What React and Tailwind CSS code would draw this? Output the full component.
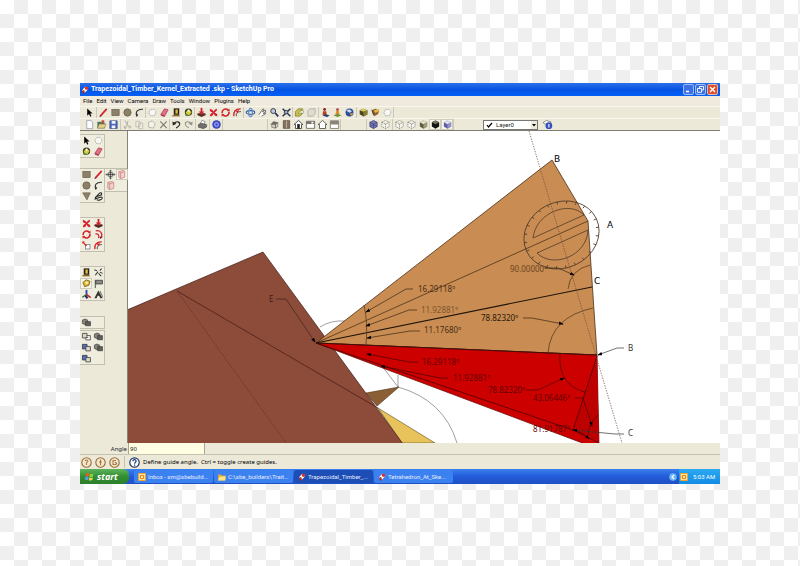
import React from "react";

const RED = "#d3202a";

const art = {
  cursor: <path d="M3.5 1.5v8l2-1.8 1.3 2.8 1.2-.6-1.2-2.7h2.6z" fill="#000" />,
  pencil: <><path d="M2.5 10 9.5 2" stroke={RED} strokeWidth="1.8" /><path d="m1.6 11 .6-2 1.3 1z" fill="#333" /></>,
  rect: <rect x="2" y="2.5" width="8" height="7" fill="#8d8069" stroke="#5f543f" strokeWidth=".6" />,
  circle: <circle cx="6" cy="6" r="4" fill="#8d8069" stroke="#5f543f" strokeWidth=".7" />,
  tri: <path d="M1.8 2h8.4L6.5 9.8z" fill="#8d8069" stroke="#5f543f" strokeWidth=".6" />,
  arc: <path d="M3 10.5C1 5 4 2 9.8 2.4M3 10l1.2-2" fill="none" stroke="#333" strokeWidth="1.1" />,
  squiggle: <path d="M2 9.500C4 4 9 0 9.500 3S2 5 2.500 7.500 9 5 10 7 6 11 4 9.500" fill="none" stroke="#222" strokeWidth="1.1" />,
  comp: <path d="m2 6 2-3.4h3.5L10 5 8 9.5H4z" fill="#f8f8f4" stroke="#a3a39b" strokeWidth=".9" strokeDasharray="1.5 .7" />,
  eraser: <><path d="m2 8 4-6 4 1-3.6 6.6z" fill="#e26f86" stroke="#9c3145" strokeWidth=".7" /><path d="m2 8 4.4 1.6-.4 1.2L2 9.4z" fill="#a62f46" /></>,
  door: <><path d="M3 1.5h6v7H3z" fill="#252016" /><path d="M4.8 2.7h2.6v4.6H4.8z" fill="#e6b83c" /><path d="M1.5 9.5h8" stroke="#8c6e24" strokeWidth="1.5" /></>,
  paint: <><circle cx="6" cy="5.5" r="4" fill="#3b3b1d" /><path d="M3 5.5 6.5 3l3 2.5L7 9 3.6 8z" fill="#d7ce3e" /><path d="m2 9 2-2 1.2 3z" fill="#42872e" /><circle cx="6" cy="4" r="1.2" fill="#fff" /></>,
  push: <><path d="M6 1v5" stroke={RED} strokeWidth="2" /><path d="M2 6.800h8l.8 1.800L6 11 1.200 8.600z" fill="#592b26" /><path d="M3 4.800h6L6 8.400z" fill={RED} /></>,
  move: <path d="m2 2 3 1.2L6 5l1.6-2.4L10 2 9.3 4.4 7 6l3 1.7.2 2.5-2.6-.6L6 7 4.6 9.7 2 10l.6-2.4L5 6 2.2 4.6z" fill={RED} />,
  rotate: <><path d="M2.3 6.5C2 2.8 6 .9 8.7 3.2M9.8 5.4c.4 3.8-3.7 5.6-6.4 3.5" fill="none" stroke={RED} strokeWidth="1.7" /><path d="m7.3 4.4 3.2.6-.2-3.4zM4.7 7.7l-3.2-.4.5 3.3z" fill={RED} /></>,
  follow: <><path d="M3 2c5-1 8 3 6 7M2.5 5.5C6 4.5 7 7 6 10" fill="none" stroke={RED} strokeWidth="1.3" /><path d="m7 8.5 3.8 0L8 11z" fill="#6e1c1c" /></>,
  scale: <><rect x="4.8" y="4.8" width="5" height="5" fill="#fff" stroke="#777" strokeWidth=".8" /><path d="m2 2 4 4.6" stroke={RED} strokeWidth="1.4" /><path d="M1.5 1.5h2.8L1.6 4.2z" fill={RED} /></>,
  offset: <><path d="M2 10C1.3 5 4 1.8 9.5 2" fill="none" stroke={RED} strokeWidth="1.4" /><path d="M4.8 10C4 7 6 5 9.6 5" fill="none" stroke="#333" strokeWidth="1" /><path d="m4 4 3.8-.4L6 7z" fill={RED} /></>,
  orbit: <><ellipse cx="6" cy="6" rx="4.6" ry="2" fill="none" stroke="#315fa8" strokeWidth="1.3" /><ellipse cx="6" cy="6" rx="2" ry="4.6" fill="none" stroke="#6089c5" strokeWidth="1.3" /></>,
  hand: <path d="M2 8.5 6.5 2l1 .6L6 5.4l3-2 .9 1L6.7 7l2.8-.6-.4 1.2L5 10" fill="#fff" stroke="#444" strokeWidth=".8" />,
  zoom: <><circle cx="4.6" cy="4.4" r="2.7" fill="#b9cbe8" stroke="#333" strokeWidth="1" /><path d="m6.8 6.5 3.2 3.7" stroke="#202a56" strokeWidth="1.8" /></>,
  extents: <><path d="m1.8 1.8 8.4 8.4M10.2 1.8l-8.4 8.4" stroke="#252d50" strokeWidth="1.5" /><circle cx="5.6" cy="5.6" r="2" fill="#94abd6" stroke="#222" strokeWidth=".8" /></>,
  tape: <><path d="m2 5 3.6-3 4.3 1.6L8.5 8 4 9.5z" fill="#e2bc31" stroke="#5d4a12" strokeWidth=".8" /><circle cx="6.2" cy="5.2" r="1.3" fill="#fff6bf" /></>,
  getm: <><path d="m1.5 5 3-3h5v5l-3 3h-5z" fill="#cbbd48" stroke="#6b6223" strokeWidth=".6" /><path d="M5 7.5C5 5 7 4.5 8 4.5V3l3 2.4L8 7.7V6.3C7 6.3 6.3 6.6 5 7.5z" fill="#fff" stroke="#557024" strokeWidth=".5" /></>,
  grey: <path d="m2 4 2.6-2H10v5L7.6 10H2z" fill="#dedcd0" stroke="#aeac9f" strokeWidth=".9" />,
  person: <><circle cx="5" cy="2.8" r="1.6" fill="#8a2d20" /><path d="M3.2 4.6h3.6l.6 4.4H2.8z" fill="#b14322" /><path d="m6 8 4.5 1L8 11 3 9.6z" fill="#263d73" /></>,
  person2: <><circle cx="6" cy="2.8" r="1.5" fill="#b33f29" /><path d="M4.5 4.4h3l.7 4H3.8z" fill="#df8b24" /><path d="m1.5 9 4.5-1.5L10.5 9 6 10.8z" fill="#679237" /></>,
  globe: <><circle cx="6" cy="6" r="4.3" fill="#2a4d9b" /><path d="M2.5 4C5 1.5 8 3 8.5 5L6 6.2z" fill="#c9dbf3" /><path d="m6 7 4-.5-1.7 3.2z" fill="#d99835" /></>,
  box: <><path d="m1.8 3.5 4-1.7 4.4 1.7v4.6L6 10.4 1.8 8z" fill="#4a4621" /><path d="m1.8 3.5 4-1.7 4.4 1.7L6 5.2z" fill="#dccf60" /><path d="m6 5.2 4.2-1.7v4.6L6 10.4z" fill="#8b7d30" /></>,
  box2: <><path d="M2 3.5 6 2l4 1.5-1.2 4L4.6 10z" fill="#8f5c25" /><path d="m4 4 5-2 1.4 2L6 6.6z" fill="#eab942" /><path d="m2 3 2 6" stroke="#333" /></>,
  new: <path d="M3 1.5h4.5L9.5 4v6.5H3z" fill="#fff" stroke="#8b93a4" strokeWidth=".8" />,
  open: <><path d="M1.5 3h4l1 1.2h3V10h-8z" fill="#4d7564" /><path d="M3.4 5.5H11L9.3 10H1.5z" fill="#e2ce86" stroke="#6b6136" strokeWidth=".5" /><path d="M6 1.4h3v3H6z" fill="#c24d3f" /></>,
  save: <><path d="M2 2h8v8.3H2z" fill="#5067bd" stroke="#26387e" strokeWidth=".7" /><path d="M4 2.3h4.2v3H4zM4 7h4v3H4z" fill="#f2f4fb" /></>,
  cut: <path d="m3 1.5 4 6.3M6.5 2 5 8M3.3 8.2a1.1 1.1 0 1 0 .1 0zM8.5 7.7a1.1 1.1 0 1 0 .1 0z" fill="none" stroke="#a9a79b" strokeWidth=".9" />,
  copy: <path d="M2 2.5h4.5v6H2zM5 4.5h4.5v6H5z" fill="#efede2" stroke="#b5b3a7" strokeWidth=".8" />,
  paste: <path d="M2.6 3.5 7 2l3 3.4L8 10 3 9z" fill="#f3f2ea" stroke="#b0aea3" strokeWidth=".9" />,
  del: <path d="m2.5 2.5 7 7.5m0-7.5-7 7.5" stroke="#77756c" strokeWidth="1.1" />,
  undo: <><path d="M3 5C6 1.6 10 3 9.4 6 9 8 7 9 5.5 9.8" fill="none" stroke="#222" strokeWidth="1.3" /><path d="M1.5 2.6 2 7l4-1.7z" fill="#222" /></>,
  redo: <><path d="M9 5C6 1.6 2 3 2.6 6 3 8 5 9 6.5 9.8" fill="none" stroke="#929188" strokeWidth="1.1" /><path d="M10.5 2.6 10 7 6 5.3z" fill="#929188" /></>,
  print: <><path d="m3.5 5 2-3.5L9 3 7.6 6z" fill="#fff" stroke="#555" strokeWidth=".6" /><path d="m1.5 6 3-1.5 6 1.5v2.6L7 10.5 1.5 9z" fill="#6f6f6b" stroke="#333" strokeWidth=".5" /></>,
  info: <><circle cx="6" cy="6" r="4.3" fill="#3f50cd" stroke="#2938a6" strokeWidth=".6" /><circle cx="6" cy="6" r="2" fill="none" stroke="#c9d0ff" strokeWidth=".9" /></>,
  iso: <><path d="M1.3 6 5 2.5l5.5 1.3L7 6z" fill="#6d6b62" /><path d="M3 6h4v4L3 9zM7 6l2.6-1.6v3.8L7 10z" fill="#d9d5c4" stroke="#55534b" strokeWidth=".6" /></>,
  top: <><path d="M2.5 1.8h7v8.4h-7z" fill="#82715c" stroke="#4c4237" strokeWidth=".7" /><path d="M6 2v8" stroke="#c6baa8" strokeWidth=".9" /></>,
  front: <><path d="M1.2 6 6 1.6 10.8 6H9.3v4.4H2.7V6z" fill="#fff" stroke="#333" strokeWidth=".9" /><path d="M4.6 5.5h2.8v5H4.6z" fill="#222" /></>,
  right: <><path d="M1.5 2.5h9v7.7h-9z" fill="#fff" stroke="#333" strokeWidth=".7" /><path d="M1.5 2.5h9v3h-9z" fill="#77746b" /><path d="M7 3h2v2H7z" fill="#fff" /></>,
  back: <path d="M1.2 6 6 1.6 10.8 6H9.3v4.4H2.7V6z" fill="#fff" stroke="#333" strokeWidth=".8" />,
  left: <><path d="M1.5 2h9v8.3h-9z" fill="#fff" stroke="#55534d" strokeWidth=".7" /><path d="M1.5 2h9v4h-9z" fill="#898378" /></>,
  xray: <><path d="m2 3.6 4-2 4 2v4.6l-4 2.3-4-2.3z" fill="#777ab8" stroke="#33366c" strokeWidth=".7" /><path d="m2 3.6 4 2 4-2M6 5.6v4.9M2 8.2l4-2 4 2" fill="none" stroke="#33366c" strokeWidth=".6" /></>,
  wire: <path d="m2 3.6 4-2 4 2v4.6l-4 2.3-4-2.3zm0 0 4 2 4-2M6 5.6v4.9" fill="#f6f5ef" stroke="#77756d" strokeWidth=".8" strokeDasharray="1.4 .8" />,
  shade: <><path d="m2 3.6 4-2 4 2v4.6l-4 2.3-4-2.3z" fill="#5f5c45" /><path d="m2 3.6 4-2 4 2-4 2z" fill="#e6e2c8" /><path d="m6 5.6 4-2v4.6l-4 2.3z" fill="#a19b76" /></>,
  dark: <><path d="m2 3.6 4-2 4 2v4.6l-4 2.3-4-2.3z" fill="#15150f" /><path d="m2 3.6 4-2 4 2-4 2z" fill="#75735f" /></>,
  mono: <><path d="m2 3.6 4-2 4 2v4.6l-4 2.3-4-2.3z" fill="#5c5ea8" /><path d="m2 3.6 4-2 4 2-4 2z" fill="#dfe0ee" /><path d="m6 5.6 4-2v4.6l-4 2.3z" fill="#9193c9" /></>,
  layer: <><path d="m1 4 4-2.5 5 2-4 3.5z" fill="#fff" stroke="#777" strokeWidth=".9" /><circle cx="7.5" cy="7.3" r="3.7" fill="#3453bd" /><path d="M7.5 5.5v3.8" stroke="#fff" strokeWidth="1.2" /></>,
  axis4: <path d="M6 1.2v9.6M1.2 6h9.6M4.6 2.6 6 1.2l1.4 1.4M4.6 9.4 6 10.8l1.4-1.4M2.6 4.6 1.2 6l1.4 1.4M9.4 4.6 10.8 6 9.4 7.4M4 4h4v4H4z" fill="none" stroke="#333" strokeWidth=".8" />,
  sect: <path d="M3 2.6 8 1.5l1.6 1.4V9L5 10.5 3 9zM3 2.6l2 1.4v6.5M5 4l4.6-1.1" fill="#f0d0cd" stroke="#c27370" strokeWidth=".7" />,
  dim: <path d="m1.5 3 3 1.2m3 1.4 3 1.4M2.5 9l3-4m2-1L9.4 1.6M6 7l3 3" stroke="#333" strokeWidth="1.1" />,
  flag: <><path d="M2.5 2v9" stroke="#333" strokeWidth=".9" /><path d="M3 2.5h7.3v4H3z" fill="#8c8c84" stroke="#333" strokeWidth=".8" /></>,
  axes: <><path d="M6 6V1" stroke="#2444b8" strokeWidth="2" /><path d="m6 6-4.5 3" stroke="#21772c" strokeWidth="1.6" /><path d="m6 6 4.6 3.3" stroke={RED} strokeWidth="1.7" /><path d="m4 8 2-1.5L8 9.5 6 11z" fill="#20296b" /></>,
  text3d: <><path d="M1.5 10 5.8 1.5 10.5 10H8L6.6 7.4H5L4 10z" fill="#37352f" /><path d="m6.8 2.7 1.4-.7 2.9 6.4-.8 1z" fill="#8a877b" /></>,
  solid: <><path d="m1.5 3.4 2.8-1.2 3 1.2v3.8L4.2 8.4 1.5 7z" fill="#85837a" stroke="#3d3c38" strokeWidth=".7" /><path d="M5 5h5.4v4.6H5z" fill="#5d5c56" stroke="#333" strokeWidth=".6" /></>,
  solidw: <><path d="M1.6 2.6h5v5h-5z" fill="#d9d7ca" stroke="#44433e" strokeWidth=".9" /><path d="M6 5h4.2v4.7H5.3V7H8" fill="#fff" stroke="#44433e" strokeWidth=".9" /></>,
  solidb: <><path d="M1.6 2.6h5v5h-5z" fill="#526fb4" stroke="#35384a" strokeWidth=".9" /><path d="M5.3 5h5v4.7h-5z" fill="#dddbd0" stroke="#44433e" strokeWidth=".9" /></>,
};

function Tool({ name, on }) {
  return (
    <button aria-label={name} className={`flex h-[11px] w-3 shrink-0 items-center justify-center ${on ? "bg-[#f8f6ea] outline outline-1 -outline-offset-1 outline-[#cfccba]" : ""}`}>
      <svg viewBox="0 0 12 12" className="size-[11px]" aria-hidden="true">{art[name]}</svg>
    </button>
  );
}

function Group({ names, wide, first, on = [] }) {
  const edge = first ? "" : wide ? "ml-px border-l border-[#cbc8b7]" : "border-l border-[#cbc8b7]";
  return (
    <div className={`flex h-[11px] shrink-0 ${edge}`}>
      {names.map((n, i) => <Tool key={i} name={n} on={on.includes(n)} />)}
    </div>
  );
}

function Palette({ names, on }) {
  return (
    <div className="grid w-[25px] shrink-0 grid-cols-2 justify-items-center border-t border-r border-b border-[#c2bfae] bg-[#efedde]">
      {names.map((n, i) => n ? <Tool key={i} name={n} on={n === on} /> : <span key={i} />)}
    </div>
  );
}

function Logo() {
  return (
    <svg viewBox="0 0 10 10" className="size-2 shrink-0" aria-hidden="true">
      <path d="m1 6 4-5 4 1-1 3-4 4z" fill="#fff" />
      <path d="M4 1.5 8.5 1 9 4 6 5z" fill="#d5311f" />
      <path d="m1 6 3-1 1 4-2 .6z" fill="#b52318" />
    </svg>
  );
}

function Arrow({ points }) {
  return <polyline points={points} fill="none" stroke="currentColor" strokeWidth=".7" markerEnd="url(#tip)" />;
}

const ticks = Array.from({ length: 24 }, (_, i) => (i * Math.PI) / 12);

function Model() {
  return (
    <svg viewBox="128 131 592 312" className="block min-w-0 flex-1 bg-white font-['Noto_Sans','Open_Sans',sans-serif]" role="img" aria-label="Timber kernel model">
      <defs>
        <marker id="tip" viewBox="0 0 6 4" refX="5" refY="2" markerWidth="5" markerHeight="4" markerUnits="userSpaceOnUse" orient="auto">
          <path d="M0 0 6 2 0 4z" fill="#000" />
        </marker>
      </defs>
      <path d="M320 327Q331 320 345 321M398 375v12Q444 400 457 443M382 366l16 21" fill="none" stroke="#777" strokeWidth=".7" />
      <path d="M378 408 435 443h-33z" fill="#e8c35c" stroke="#5b4a1e" strokeWidth=".6" />
      <path d="m366 393 33-6-22 19z" fill="#8c5e33" stroke="#4a3018" strokeWidth=".6" />
      <path d="M127 310 263 252 403 444H127z" fill="#8d4b3a" stroke="#40201a" strokeWidth=".7" />
      <path d="m177 291 201 117" stroke="#4a1f18" strokeWidth=".8" />
      <path d="m177 291 109 152" stroke="#5e2c22" strokeWidth=".6" strokeDasharray="2 1" />
      <path d="M316 343 552 160l36 61 9 134z" fill="#c98c52" stroke="#4a2f17" strokeWidth=".8" />
      <path d="m316 343 281 12 2 89h-14z" fill="#cd0000" stroke="#5b0000" strokeWidth=".7" />
      <path d="m597 356-24 74 15 6 11 8z" fill="#bd0000" />
      <path d="m316 343 257 87 24-74M573 430l26 13" fill="none" stroke="#4c0000" strokeWidth=".8" />
      <path d="m316 343 272-122" stroke="#4c3219" strokeWidth=".8" />
      <path d="m316 343 276-56" stroke="#1f1409" strokeWidth="1.1" />
      <path d="m316 343 281 12" stroke="#3a1208" strokeWidth=".9" />
      <path d="M529 131 622 443" stroke="#6b4a3a" strokeWidth=".7" strokeDasharray="1.4 1.2" />
      <path d="M364 305q4 18 2 39M568 289q2-19 22-24M548 353q3-36 45-45" fill="none" stroke="#5b3c1e" strokeWidth=".8" />
      <path d="M560 354q-2 31 25 38M588 436q0-12 10-21" fill="none" stroke="#5b0000" strokeWidth=".8" />

      <g fill="none" stroke="#4f3c2a" strokeWidth=".8">
        <g transform="rotate(-25 561.5 235)">
          <ellipse cx="561.5" cy="235" rx="38.5" ry="33" />
          {ticks.map((a) => (
            <line key={a} x1={561.5 + 38.5 * Math.cos(a)} y1={235 + 33 * Math.sin(a)} x2={561.5 + 35.5 * Math.cos(a)} y2={235 + 30.4 * Math.sin(a)} />
          ))}
        </g>
        <path d="M533 238C536 212 570 200 584 215z" />
        <path d="m537 253 51-23C587 256 553 269 537 253z" />
      </g>

      <g className="text-[#3b2716]">
        <Arrow points="413,289 406,289 366,312" />
        <Arrow points="417,310 409,310 366,326" />
        <Arrow points="420,331 410,331 367,338" />
        <Arrow points="523,318 532,318 563,324" />
        <Arrow points="545,268 558,268 574,275" />
        <Arrow points="276,299 286,299 315,342" />
      </g>
      <g className="text-[#4c0000]">
        <Arrow points="418,362 409,362 367,354" />
        <Arrow points="448,378 440,378 381,366" />
        <Arrow points="526,390 538,390 564,378" />
        <Arrow points="575,398 583,398 592,426" />
        <Arrow points="574,430 584,434 589,439" />
      </g>
      <g className="text-[#333]">
        <Arrow points="624,348 617,348 598,355" />
        <Arrow points="624,434 615,434 573,430" />
      </g>

      <g className="text-[8px]">
        <g fill="#4b3017">
          <text x="418" y="292">16.29118º</text>
          <text x="421" y="313" fill="#80552e">11.92881º</text>
          <text x="424" y="333">11.17680º</text>
          <text x="481" y="321" fill="#2c1b0b">78.82320º</text>
          <text x="510" y="272" fill="#6b4522">90.00000º</text>
        </g>
        <g fill="#650000">
          <text x="422" y="365">16.29118º</text>
          <text x="453" y="381">11.92881º</text>
          <text x="488" y="393">78.82320º</text>
          <text x="533" y="401">43.06446º</text>
          <text x="533" y="432">81.91787º</text>
        </g>
        <text x="269" y="302" fill="#3e1c15">E</text>
        <text x="628" y="351" fill="#333">B</text>
        <text x="628" y="436" fill="#333">C</text>
      </g>
      <g className="font-['DejaVu_Sans',sans-serif] text-[9px]" fill="#000">
        <text x="554" y="162">B</text>
        <text x="607" y="228">A</text>
        <text x="594" y="284">C</text>
      </g>
    </svg>
  );
}

function Coin({ label, d }) {
  return (
    <button aria-label={label} className="size-[11px]">
      <svg viewBox="0 0 11 11" aria-hidden="true">
        <circle cx="5.5" cy="5.5" r="4.7" fill="#f3e7cf" stroke="#9c6b35" strokeWidth="1.1" />
        <path d={d} fill="none" stroke="#a87c46" strokeWidth="1.1" />
      </svg>
    </button>
  );
}

function Task({ icon, active, children }) {
  return (
    <button className={`flex h-[13px] w-[79px] shrink-0 items-center gap-0.5 rounded-xs pl-1 font-[Roboto,sans-serif] text-[6px] text-[#e4ecff] ${active ? "bg-[#1c4eb5]" : "bg-[#3c81f0]"}`}>
      {icon}
      <span className="whitespace-nowrap">{children}</span>
    </button>
  );
}

function Mail() {
  return (
    <svg viewBox="0 0 8 8" className="size-2 shrink-0" aria-hidden="true">
      <rect width="8" height="8" rx="1" fill="#f1a52d" />
      <rect x="1" y="1" width="6" height="6" fill="#fbe6ac" />
      <circle cx="4" cy="4" r="1.8" fill="none" stroke="#dd8210" strokeWidth="1.1" />
    </svg>
  );
}

export default function App() {
  return (
    <div className="min-h-screen bg-white bg-[conic-gradient(#efefef_25%,#ffffff_0_50%,#efefef_0_75%,#ffffff_0)] bg-[length:28px_28px] px-[10%] py-[83px] font-['Noto_Sans','Open_Sans',sans-serif] text-[6px] leading-none text-[#222]">
      <main className="flex flex-col bg-[#ece9d8]">
        <header className="flex h-[13px] items-center bg-linear-to-b from-[#2b6fe8] via-[#0453e4] to-[#0560f5] pr-0.5 pl-px text-white">
          <Logo />
          <h1 className="ml-0.5 flex-1 font-[Roboto,sans-serif] text-[7px] font-bold whitespace-nowrap">Trapezoidal_Timber_Kernel_Extracted .skp - SketchUp Pro</h1>
          <div className="flex gap-px">
            <button aria-label="Minimize" className="size-[11px] rounded-xs border border-[#9dbcf5] bg-[#3c70e6]">
              <svg viewBox="0 0 9 9" aria-hidden="true"><path d="M2 6.5h3" stroke="#fff" strokeWidth="1.6" /></svg>
            </button>
            <button aria-label="Restore" className="size-[11px] rounded-xs border border-[#9dbcf5] bg-[#3c70e6]">
              <svg viewBox="0 0 9 9" aria-hidden="true"><path d="M3.5 3V1.5h4V5H6M1.5 3.5h4v3.8h-4z" fill="none" stroke="#fff" strokeWidth=".9" /></svg>
            </button>
            <button aria-label="Close" className="size-[11px] rounded-xs border border-[#eab5a4] bg-[#dd4f2b]">
              <svg viewBox="0 0 9 9" aria-hidden="true"><path d="m2 2 5 5m0-5L2 7" stroke="#fff" strokeWidth="1.4" /></svg>
            </button>
          </div>
        </header>

        <nav className="flex h-[10px] items-center gap-1 bg-[#efeadd] pl-[3px] font-[Roboto,sans-serif] text-black">
          {["File", "Edit", "View", "Camera", "Draw", "Tools", "Window", "Plugins", "Help"].map((m) => <button key={m}>{m}</button>)}
        </nav>

        <div className="flex flex-col border-b border-[#7f7d72]">
          <div className="flex h-3 items-center border-t border-[#f8f6ec] pl-[3px]">
            <Group first names={["cursor"]} />
            <Group wide names={["pencil", "rect", "circle", "arc"]} />
            <Group names={["comp", "eraser", "door", "paint"]} />
            <Group names={["push", "move", "rotate", "offset"]} />
            <Group names={["orbit", "hand", "zoom", "extents"]} />
            <Group names={["getm", "grey"]} />
            <Group wide names={["person", "person2", "globe"]} />
            <Group wide names={["box", "box2", "comp"]} />
            <span className="h-[11px] border-l border-[#cbc8b7]" />
          </div>
          <div className="flex h-3 items-center border-t border-[#f8f6ec] pl-[3px]">
            <Group first names={["new", "open", "save"]} />
            <Group wide names={["cut", "copy", "paste", "del"]} />
            <Group names={["undo", "redo"]} />
            <Group wide names={["print"]} />
            <Group wide names={["info"]} />
            <span className="mr-11 h-[11px] border-l border-[#cbc8b7]" />
            <Group names={["iso", "top", "front", "right", "back", "left"]} />
            <span className="mr-6 h-[11px] border-l border-[#cbc8b7]" />
            <Group wide names={["xray", "wire"]} />
            <Group wide names={["wire", "wire", "shade", "dark", "mono"]} on={["dark", "mono"]} />
            <span className="mr-[29px] h-[11px] border-l border-[#cbc8b7]" />
            <div className="grid h-[10px] w-[55px] shrink-0 items-center border border-[#777] bg-white">
              <select aria-label="Layer" className="col-start-1 row-start-1 h-2 w-full appearance-none bg-transparent pl-3 font-[Roboto,sans-serif] text-[6px] leading-none">
                <option>Layer0</option>
              </select>
              <svg viewBox="0 0 53 8" className="pointer-events-none col-start-1 row-start-1 h-2 w-full" aria-hidden="true">
                <path d="m3 4 1.5 2L8 2" fill="none" stroke="#000" strokeWidth="1.2" />
                <path d="M47 0h6v8h-6z" fill="#ece9d8" /><path d="M48 3h4l-2 2.4z" fill="#000" />
              </svg>
            </div>
            <span className="w-[3px]" />
            <Tool name="layer" />
          </div>
        </div>

        <div className="flex">
          <aside className="flex w-12 shrink-0 flex-col border-r border-[#85837a]">
            <div className="pt-[3px]"><Palette names={["cursor", "comp", "paint", "eraser"]} /></div>
            <div className="flex items-start pt-[10px]">
              <Palette names={["rect", "pencil", "circle", "arc", "tri", "squiggle"]} />
              <div className="grid flex-1 grid-cols-2 justify-items-center border-y border-[#c2bfae] bg-[#efedde]">
                <Tool name="axis4" /><Tool name="sect" on /><Tool name="sect" />
              </div>
            </div>
            <div className="pt-[14px]"><Palette names={["move", "push", "rotate", "follow", "scale", "offset"]} /></div>
            <div className="pt-[14px]"><Palette names={["door", "dim", "tape", "flag", "axes", "text3d"]} on="tape" /></div>
            <div className="pt-[15px]"><Palette names={["solid", null]} /></div>
            <div className="pt-px"><Palette names={["solidw", "solid", "solidb", "solid", "solidb", null]} /></div>
          </aside>
          <Model />
        </div>

        <div className="flex h-3 items-center border-b border-[#c5c2b0]">
          <label htmlFor="angle" className="w-12 pr-px text-right">Angle</label>
          <input id="angle" defaultValue="90" className="h-[11px] w-[77px] border-x border-[#aaa796] bg-[#fffde2] px-px text-[6px]" />
        </div>
        <footer className="flex h-[14px] items-center gap-[3px] pl-px">
          <Coin label="Location" d="M4 4q1.5-2 3 0L5.5 6v2" />
          <Coin label="Credits" d="M5.5 2.6v5.6M4 5h3" />
          <Coin label="Sign in" d="M7 3.5H4v4h3.5M6 5l2 2" />
          <span className="mx-px h-3 border-l border-[#c5c2b0]" />
          <svg viewBox="0 0 11 11" className="size-[11px]" aria-hidden="true">
            <circle cx="5.5" cy="5.5" r="4.7" fill="#fff" stroke="#1d3a6e" strokeWidth="1.2" />
            <path d="M3.9 4.3c0-2.3 3.4-2 3.2 0-.1 1-1.5 1.1-1.5 2.4M5.6 7.6v1.2" fill="none" stroke="#1d3a6e" strokeWidth="1.2" />
          </svg>
          <p className="whitespace-pre text-black">Define guide angle.  Ctrl = toggle create guides.</p>
        </footer>

        <div className="flex h-[15px] items-center bg-linear-to-b from-[#3a80ee] via-[#235bd9] to-[#1f50c4]">
          <button className="mr-[5px] flex h-[15px] w-[49px] items-center gap-[3px] rounded-r-md bg-linear-to-b from-[#5db35b] via-[#338f33] to-[#2c7f2c] pl-[5px] text-[9px] font-bold text-white italic">
            <svg viewBox="0 0 10 10" className="size-[9px]" aria-hidden="true">
              <path d="M1 2q2-1.5 3.6-.3L4 5Q2.3 4 .5 5z" fill="#ee5a28" />
              <path d="M5.4 2q2 1 4-.2L8.8 5q-2 1-4 .2z" fill="#8ad043" />
              <path d="M.4 5.8q2-1.3 3.6-.2L3.4 9Q1.8 8 0 9z" fill="#5d9cf3" />
              <path d="M4.8 6q2 1 4-.1L8.2 9q-2 1-4 .1z" fill="#f8d342" />
            </svg>
            start
          </button>
          <div className="flex flex-1 gap-px">
            <Task icon={<Mail />}>Inbox - sm@sbebuild...</Task>
            <Task icon={<svg viewBox="0 0 8 8" className="size-2 shrink-0" aria-hidden="true"><path d="M0 1.5h3l1 1h3.5v5H0z" fill="#d9a93b" /><path d="M1.5 3.5H8l-1 4H0z" fill="#fbe388" /></svg>}>C:\sbe_builders\Trait...</Task>
            <Task active icon={<Logo />}>Trapezoidal_Timber_...</Task>
            <Task icon={<Logo />}>Tetrahedron_At_Ske...</Task>
          </div>
          <div className="flex h-[15px] items-center gap-[2px]">
            <button aria-label="Show hidden icons" className="size-2">
              <svg viewBox="0 0 8 8" aria-hidden="true"><circle cx="4" cy="4" r="3.8" fill="#6bb8f5" /><path d="M5 2 3 4l2 2" fill="none" stroke="#fff" strokeWidth="1.2" /></svg>
            </button>
            <div className="flex h-[15px] w-[41px] items-center gap-[5px] bg-linear-to-b from-[#2ba9f2] to-[#128be3] pl-px font-[Roboto,sans-serif] text-[6px] text-white">
              <Mail />
              <time className="whitespace-nowrap">5:03 AM</time>
            </div>
          </div>
        </div>
      </main>
    </div>
  );
}
